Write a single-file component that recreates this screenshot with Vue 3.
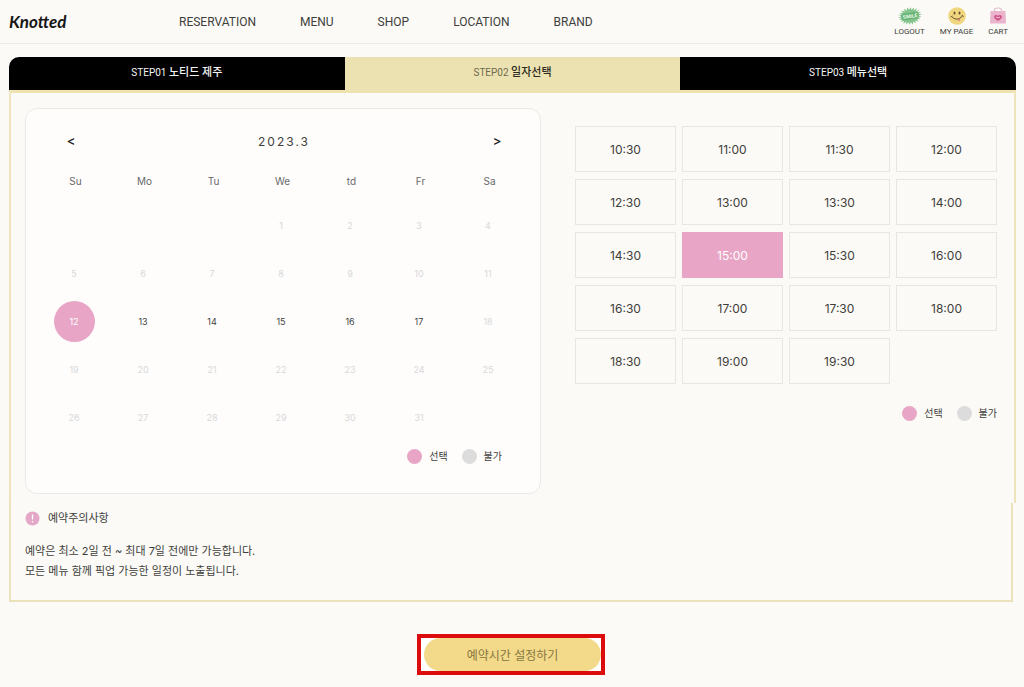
<script setup>
import { ref } from 'vue'

const menu = ['RESERVATION', 'MENU', 'SHOP', 'LOCATION', 'BRAND']
const steps = [
  { no: 'STEP01', name: '노티드 제주' },
  { no: 'STEP02', name: '일자선택' },
  { no: 'STEP03', name: '메뉴선택' },
]
const weekdays = ['Su', 'Mo', 'Tu', 'We', 'td', 'Fr', 'Sa']
const weeks = Array.from({ length: 5 }, (_, w) =>
  Array.from({ length: 7 }, (_, d) => {
    const n = w * 7 + d - 2
    return n > 0 && n <= 31 ? n : null
  })
)
const day = ref(12)
const time = ref('15:00')
const times = Array.from({ length: 19 }, (_, i) => {
  const m = 630 + i * 30
  return `${Math.floor(m / 60)}:${m % 60 ? '30' : '00'}`
})
const closed = (n) => n < 12 || n > 17
const burst = Array.from({ length: 44 }, (_, i) => {
  const a = (i / 44) * Math.PI * 2
  const k = i % 2 ? 0.7 : 1
  return `${(12 + 12 * k * Math.cos(a)).toFixed(1)},${(9 + 8.8 * k * Math.sin(a)).toFixed(1)}`
}).join(' ')
</script>

<template>
  <div class="page">
    <header class="top">
      <a class="logo" href="#">Knotted</a>
      <nav class="menu">
        <a v-for="m in menu" :key="m" href="#">{{ m }}</a>
      </nav>
      <div class="tools">
        <a href="#">
          <svg width="24" height="18" viewBox="0 0 24 18" aria-hidden="true">
            <g transform="rotate(-8 12 9)">
              <polygon :points="burst" fill="#84c48c" />
              <rect x="3.500" y="6" width="17" height="6.500" rx="2" fill="#62b172" />
              <text x="12" y="11" text-anchor="middle" font-size="5" font-weight="800" fill="#e6f6e2">SMILE</text>
            </g>
          </svg>
          <span>LOGOUT</span>
        </a>
        <a href="#">
          <svg width="18" height="18" viewBox="0 0 18 18" aria-hidden="true">
            <circle cx="9" cy="9" r="8.800" fill="#f0d67e" />
            <ellipse cx="6.500" cy="6" rx="1" ry="1.500" fill="#62502e" />
            <ellipse cx="11.500" cy="6" rx="1" ry="1.500" fill="#62502e" />
            <path d="M3.500 9.500q5.500 6 11-.5M14 8.300l1.200 1.200M3 10l1-1" fill="none" stroke="#62502e" stroke-width="1" stroke-linecap="round" />
            <path d="M9 12.300l2.800-.8q1 2-.6 2.600-1.600.2-2.200-1.800z" fill="#d98a76" />
          </svg>
          <span>MY PAGE</span>
        </a>
        <a href="#">
          <svg width="18" height="18" viewBox="0 0 18 18" aria-hidden="true">
            <path d="M5.500 5V3q0-2 3.500-2t3.500 2v2" fill="none" stroke="#e2bccd" stroke-width="1.200" />
            <path d="M1.500 4h15l.5 12.500H1z" fill="#eab4cd" />
            <path d="M9 14q-5-2.700-3.600-5.200Q7 7 9 8.800q2-1.800 3.600 0Q14 11.300 9 14z" fill="#cf5287" />
            <path d="M7 10q2 1.800 4 0" fill="none" stroke="#f6cede" stroke-width="1" />
          </svg>
          <span>CART</span>
        </a>
      </div>
    </header>

    <main>
      <ol class="steps">
        <li v-for="(s, i) in steps" :key="s.no" :class="{ on: i === 1 }">
          <span>{{ s.no }}</span> <strong>{{ s.name }}</strong>
        </li>
      </ol>

      <section class="picker">
        <div class="calendar">
          <div class="month">
            <button type="button" aria-label="이전 달">&lt;</button>
            <h2>2023.3</h2>
            <button type="button" aria-label="다음 달">&gt;</button>
          </div>
          <table>
            <thead>
              <tr><th v-for="w in weekdays" :key="w" scope="col">{{ w }}</th></tr>
            </thead>
            <tbody>
              <tr v-for="(w, i) in weeks" :key="i">
                <td v-for="(n, j) in w" :key="j">
                  <button v-if="n" type="button" :disabled="closed(n)" :class="{ picked: n === day }" @click="day = n">{{ n }}</button>
                </td>
              </tr>
            </tbody>
          </table>
          <div class="legend"><i class="pink"></i><span>선택</span><i></i><span>불가</span></div>
        </div>

        <div class="hours">
          <div class="slots">
            <button v-for="t in times" :key="t" type="button" :class="{ picked: t === time }" @click="time = t">{{ t }}</button>
          </div>
          <div class="legend"><i class="pink"></i><span>선택</span><i></i><span>불가</span></div>
        </div>
      </section>

      <div class="bottom">
        <section class="notice">
          <h3>
            <svg width="15" height="15" viewBox="0 0 15 15" aria-hidden="true">
              <circle cx="7.500" cy="7.500" r="7" fill="#e3a7c7" />
              <path d="M7.500 3.500v5M7.500 10v1.500" stroke="#fff" stroke-width="1.300" />
            </svg>
            예약주의사항
          </h3>
          <p>예약은 최소 2일 전 ~ 최대 7일 전에만 가능합니다.</p>
          <p>모든 메뉴 함께 픽업 가능한 일정이 노출됩니다.</p>
        </section>

        <div class="frame">
          <button type="button">예약시간 설정하기</button>
        </div>
      </div>
    </main>
  </div>
</template>

<style>
body {
  background: #fbfaf6;
}
</style>

<style scoped>
.page {
  font-family: Inter, "Noto Sans CJK KR", sans-serif;
  color: #3e3e3c;
  font-size: 11px;
}
a {
  color: inherit;
  text-decoration: none;
}
button {
  font: inherit;
  color: inherit;
  background: none;
  border: 0;
  padding: 0;
  cursor: pointer;
}
h2, h3, p, ol {
  margin: 0;
  padding: 0;
  font-weight: 400;
}
.top {
  box-sizing: border-box;
  height: 44px;
  padding: 0 16px 0 9px;
  border-bottom: 1px solid #ecebe7;
  display: flex;
  align-items: center;
}
.logo {
  width: 170px;
  font-family: Lato, sans-serif;
  font-style: italic;
  font-weight: 700;
  font-size: 17px;
  color: #161616;
}
.menu {
  display: flex;
  gap: 44px;
  font-family: Roboto, sans-serif;
  font-size: 12px;
}
.tools {
  margin-left: auto;
  display: flex;
  gap: 15px;
  font-family: Roboto, sans-serif;
  font-size: 8px;
}
.tools a {
  display: flex;
  flex-direction: column;
  align-items: center;
  gap: 2px;
  line-height: 10px;
}
main {
  padding: 13px 8px 0 9px;
}
.steps {
  list-style: none;
  display: grid;
  grid-template-columns: repeat(3, 1fr);
  height: 33px;
  background: #000;
  border-radius: 10px 10px 0 0;
  color: #f4f4f4;
}
.steps li {
  text-align: center;
  line-height: 32px;
  font-family: Roboto, "Noto Sans CJK KR", sans-serif;
  font-size: 10px;
}
.steps strong {
  font-size: 11px;
  font-weight: 500;
}
.steps .on {
  background: #ece2b1;
  color: #2b2920;
}
.steps .on span {
  color: #6f6a4f;
}
.picker {
  display: grid;
  grid-template-columns: 516fr 422fr;
  gap: 34px;
  padding: 15px 17px 9px 14px;
  border: 2px solid #ede4bb;
  border-top: 3px solid #ede2b0;
  border-bottom: 0;
}
.calendar {
  border: 1px solid #eae9e7;
  border-radius: 12px;
  background: #fefdfc;
  padding: 20px 16px 29px 15px;
}
.month {
  display: flex;
  justify-content: space-between;
  align-items: center;
  padding: 0 21px 0 24px;
  height: 24px;
}
.month h2 {
  font-size: 12px;
  letter-spacing: 2px;
}
.month button {
  width: 12px;
  font-size: 13px;
  font-weight: 500;
  color: #222;
}
table {
  width: 100%;
  table-layout: fixed;
  border-collapse: collapse;
}
th {
  height: 40px;
  padding: 8px 0 0;
  font-size: 10px;
  font-weight: 400;
  color: #696969;
}
td {
  height: 48px;
  padding: 0 3px 0 0;
  text-align: center;
}
td button {
  width: 41px;
  height: 41px;
  border-radius: 50%;
  font-size: 9px;
}
td button:disabled {
  color: #d8d8d8;
}
.picked {
  background: #e8a5c6;
  color: #fff;
}
.legend {
  display: flex;
  justify-content: flex-end;
  align-items: center;
  font-size: 10px;
  line-height: 16px;
}
.calendar .legend {
  padding-right: 22px;
  margin-top: 7px;
}
.legend i {
  width: 15px;
  height: 15px;
  margin: 0 7px 0 14px;
  border-radius: 50%;
  background: #dcdcdc;
}
.legend .pink {
  background: #e8a5c6;
}
.hours {
  padding-top: 18px;
}
.slots {
  display: grid;
  grid-template-columns: repeat(4, 1fr);
  grid-auto-rows: 46px;
  gap: 7px 6px;
  font-size: 12px;
}
.slots button {
  border: 1px solid #e7e6e3;
}
.slots .picked {
  border-color: #e8a5c6;
}
.hours .legend {
  margin-top: 21px;
}
.bottom {
  margin-right: 3px;
}
.notice {
  padding: 5px 14px 19px;
  border: 2px solid #eae2bb;
  border-top: 0;
  line-height: 20px;
}
.notice h3 {
  display: flex;
  align-items: center;
  gap: 8px;
  font-size: 11px;
  margin-bottom: 13px;
}
.frame {
  box-sizing: border-box;
  width: 188px;
  height: 41px;
  margin: 32px auto 0;
  padding-left: 3px;
  border: 4px solid #dc0c0c;
  background: #fff;
}
.frame button {
  width: 100%;
  height: 100%;
  border-radius: 17px;
  background: #f3da8b;
  color: #877640;
  font-size: 12px;
}
</style>
